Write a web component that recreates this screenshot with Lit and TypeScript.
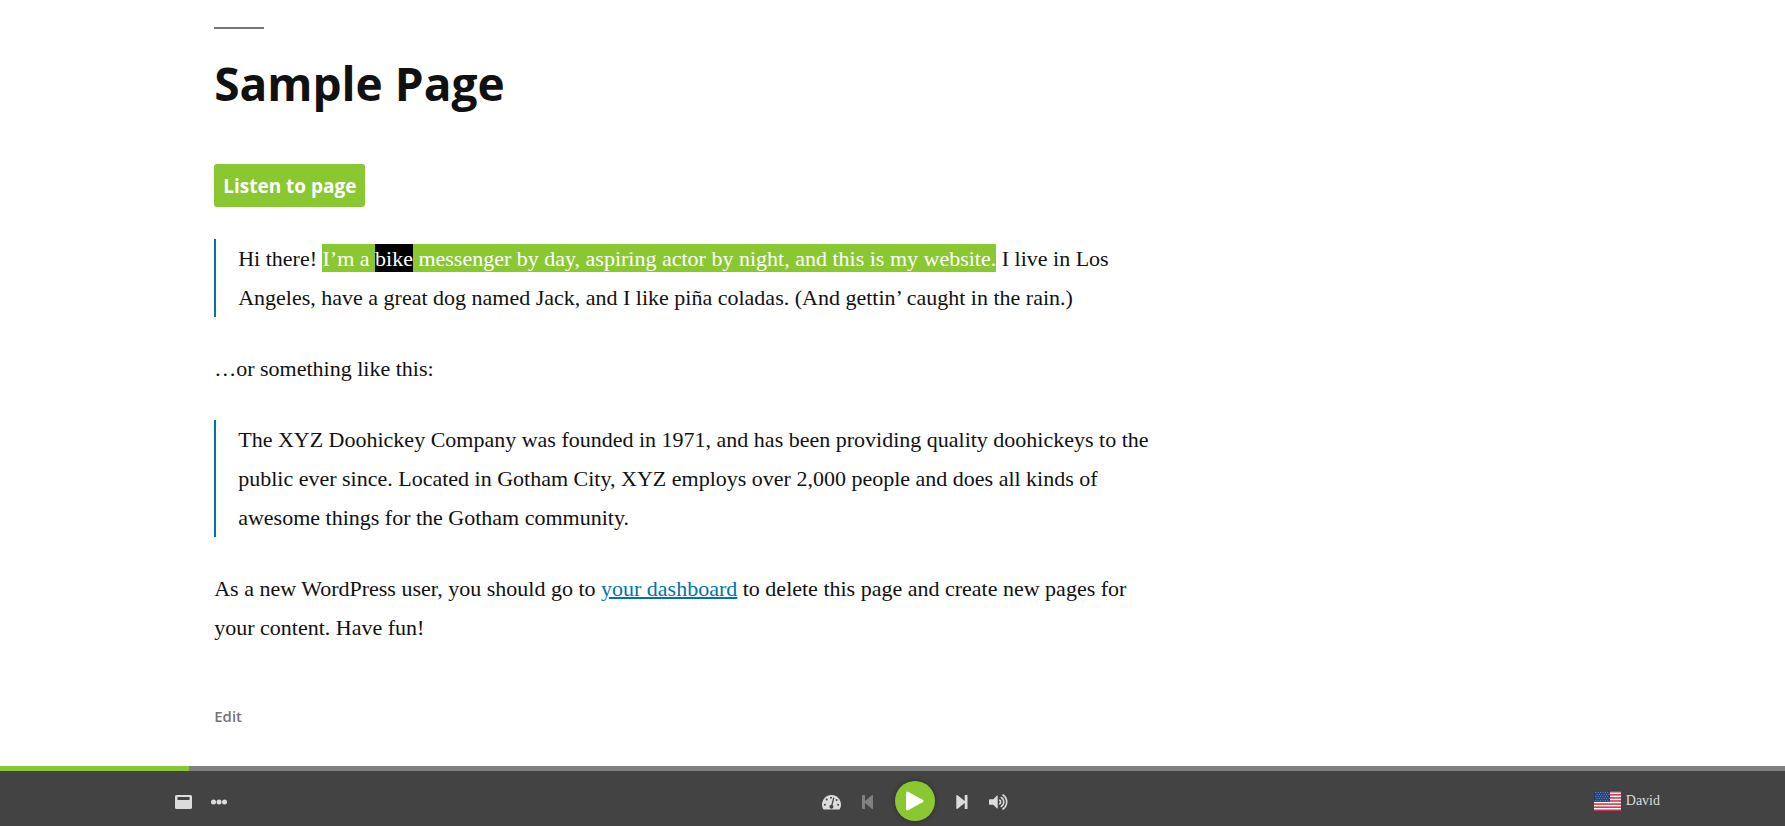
import { LitElement, html, css, svg } from "lit";
import { customElement, property } from "lit/decorators.js";

@customElement("player-bar")
class PlayerBar extends LitElement {
  @property({ type: Number }) progress = 0;
  @property() voice = "";

  static styles = css`
    :host {
      display: block;
      position: sticky;
      bottom: 0;
      background: #434343;
      color: #dcdcdc;
    }
    .track {
      height: 5px;
      background: #808080;
    }
    .fill {
      height: 100%;
      background: #8ac832;
    }
    .row {
      display: grid;
      grid-template-columns: 1fr auto 1fr;
      align-items: center;
      padding: 10px 125px 5px 170px;
    }
    .group {
      display: flex;
      align-items: center;
    }
    .center {
      gap: 21px;
    }
    .left {
      gap: 9px;
    }
    .end {
      justify-content: flex-end;
    }
    button {
      display: flex;
      align-items: center;
      justify-content: center;
      border: 0;
      padding: 2px 0 0;
      background: none;
      color: inherit;
      font: 14px/16px "Liberation Serif", serif;
      cursor: pointer;
    }
    button:disabled {
      color: #808080;
    }
    svg {
      display: block;
      fill: currentColor;
    }
    .left button {
      padding: 2px 5px 0;
    }
    .center .play {
      width: 40px;
      height: 40px;
      padding: 0;
      border-radius: 50%;
      background: #8ac832;
      color: #fff;
      box-shadow: 0 0 5px rgba(0, 0, 0, 0.35);
    }
    .end .voice {
      padding: 0;
      gap: 5px;
    }
  `;

  private flag() {
    const stars = [];
    for (let r = 0; r < 5; r++) {
      for (let c = 0; c < 6; c++) {
        stars.push(svg`<circle cx=${1.8 + c * 2.4 + (r % 2 ? 1.2 : 0)} cy=${1.3 + r * 2} r="0.5" fill="#9fb4cf"/>`);
      }
    }
    return html`<svg width="27" height="20" viewBox="0 0 27 20" aria-hidden="true">
      <rect width="27" height="20" fill="#fff" />
      ${[0, 1, 2, 3, 4, 5, 6].map((i) => svg`<rect y=${(i * 40) / 13} width="27" height=${20 / 13} fill="#c4354a"/>`)}
      <rect width="16" height="10.77" fill="#1f3f78" />
      ${stars}
    </svg>`;
  }

  render() {
    return html`
      <div class="track" role="progressbar" aria-label="Progress" aria-valuenow=${this.progress}>
        <div class="fill" style="width:${this.progress}%"></div>
      </div>
      <div class="row">
        <div class="group left">
          <button aria-label="Window">
            <svg width="17" height="14" viewBox="0 0 17 14">
              <path fill-rule="evenodd" d="M1.500 0h14A1.500 1.500 0 0 1 17 1.500v11a1.500 1.500 0 0 1-1.500 1.500h-14A1.500 1.500 0 0 1 0 12.500v-11A1.500 1.500 0 0 1 1.500 0zM2.500 2v3h12V2z" />
            </svg>
          </button>
          <button aria-label="More">
            <svg width="16" height="14" viewBox="0 0 16 14">
              <circle cx="2.500" cy="7" r="2.500" /><circle cx="8" cy="7" r="2.500" /><circle cx="13.500" cy="7" r="2.500" />
            </svg>
          </button>
        </div>
        <div class="group center">
          <button aria-label="Speed">
            <svg width="19" height="15" viewBox="0 0 19 15">
              <path d="M9.500 0A9.500 9.500 0 0 0 1.200 14.100q.3.500.9.500h14.800q.6 0 .9-.5A9.500 9.500 0 0 0 9.500 0z" />
              <g fill="#434343">
                <circle cx="9" cy="2.800" r="1" /><circle cx="4.700" cy="4.600" r="1" />
                <circle cx="2.900" cy="9.800" r="1" /><circle cx="16.100" cy="9.800" r="1" /><circle cx="14.600" cy="5" r="1" />
                <path d="M11.200 2.600l1.200.4-1.900 7.100a2 2 0 1 1-1.200-.3z" />
              </g>
            </svg>
          </button>
          <button aria-label="Previous" disabled>
            <svg width="12" height="14" viewBox="0 0 12 14">
              <path d="M.5 0h2a.5.5 0 0 1 .5.500v5.500L9.700.3q1.300-.8 1.300.7v12q0 1.500-1.300.700L3 8v5.500a.5.5 0 0 1-.5.500h-2a.5.5 0 0 1-.5-.5V.5A.5.5 0 0 1 .5 0z" />
            </svg>
          </button>
          <button class="play" aria-label="Play">
            <svg width="18" height="20" viewBox="0 0 18 20">
              <path d="M0 2.500Q0-.4 2.500.9L16.500 8.800q2 1.200 0 2.400L2.500 19.100Q0 20.400 0 17.500z" />
            </svg>
          </button>
          <button aria-label="Next">
            <svg width="12" height="14" viewBox="0 0 12 14">
              <path d="M11 0H9.200a.5.5 0 0 0-.5.500v5.500L1.600.3Q.3-.5.300 1v12q0 1.500 1.300.7L8.700 8v5.500a.5.5 0 0 0 .5.500H11a.5.5 0 0 0 .5-.5V.5A.5.5 0 0 0 11 0z" />
            </svg>
          </button>
          <button aria-label="Volume">
            <svg width="20" height="16" viewBox="0 0 20 16">
              <path d="M0 6q0-.8.800-.8h3.500L7.800 1.700q.9-.7.900.4v11.800q0 1.100-.9.400L4.300 10.800H.8q-.8 0-.8-.8z" />
              <g fill="none" stroke="currentColor" stroke-width="1.600" stroke-linecap="round">
                <path d="M10.700 6.200a2.200 2.200 0 0 1 0 3.600" /><path d="M12.300 3.500a5.300 5.300 0 0 1 0 9" /><path d="M14 1a8.500 8.500 0 0 1 0 14" />
              </g>
            </svg>
          </button>
        </div>
        <div class="group end">
          <button class="voice">${this.flag()}<span>${this.voice}</span></button>
        </div>
      </div>
    `;
  }
}

@customElement("app-root")
class AppRoot extends LitElement {
  static styles = css`
    :host {
      display: flex;
      flex-direction: column;
      min-height: 100vh;
      background: #fff;
      color: #111;
      font: 22px/39px "Liberation Serif", serif;
    }
    main {
      flex: 1;
      margin: 0 12%;
      padding-top: 27px;
    }
    article {
      max-width: 950px;
    }
    .title {
      margin: 0;
      font: 700 46px/64px "Open Sans", "Noto Sans", sans-serif;
    }
    .title::before {
      content: "";
      display: block;
      width: 50px;
      height: 2px;
      margin-bottom: 22px;
      background: #767676;
    }
    .listen {
      display: block;
      margin: 49px 0 32px;
      padding: 2px 9px 1px;
      border: 0;
      border-radius: 3px;
      background: #8ac832;
      color: #fff;
      font: 700 19px/40px "Open Sans", "Noto Sans", sans-serif;
    }
    p {
      margin: 0;
    }
    .text {
      display: flex;
      flex-direction: column;
      gap: 32px;
    }
    blockquote {
      margin: 0;
      border-left: 2px solid #0073aa;
      padding-left: 22px;
    }
    mark {
      padding: 2px 0 1px;
      background: #8ac832;
      color: #fff;
    }
    .word {
      background: #000;
    }
    .link {
      color: #0073aa;
      text-decoration-thickness: 2px;
    }
    .edit {
      display: inline-block;
      margin-top: 57px;
      color: #767676;
      font: 600 15px/24px "Open Sans", "Noto Sans", sans-serif;
      text-decoration: none;
    }
  `;

  render() {
    return html`
      <main>
        <article>
          <h1 class="title">Sample Page</h1>
          <button class="listen">Listen to page</button>
          <div class="text">
            <blockquote><p><span>Hi there! </span><mark>I’m a </mark><mark class="word">bike</mark><mark> messenger by day, aspiring actor by night, and this is my website.</mark><span> I live in Los Angeles, have a great dog named Jack, and I like piña coladas. (And gettin’ caught in the rain.)</span></p></blockquote>
            <p>…or something like this:</p>
            <blockquote><p>The XYZ Doohickey Company was founded in 1971, and has been providing quality doohickeys to the public ever since. Located in Gotham City, XYZ employs over 2,000 people and does all kinds of awesome things for the Gotham community.</p></blockquote>
            <p>As a new WordPress user, you should go to <a class="link" href="#">your dashboard</a> to delete this page and create new pages for your content. Have fun!</p>
          </div>
          <a class="edit" href="#">Edit</a>
        </article>
      </main>
      <player-bar progress="10.6" voice="David"></player-bar>
    `;
  }
}
